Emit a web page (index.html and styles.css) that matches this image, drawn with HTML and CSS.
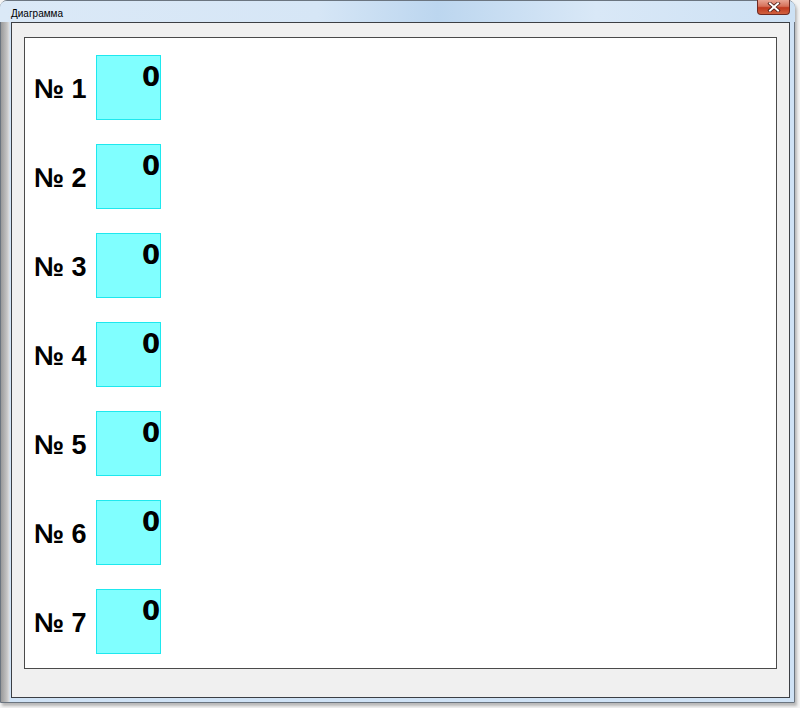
FILE: index.html
```html
<!DOCTYPE html>
<html lang="ru">
<head>
<meta charset="utf-8">
<title>Диаграмма</title>
<link rel="stylesheet" href="styles.css">
</head>
<body>
<div class="window">
  <div class="titlebar">
    <span class="title">Диаграмма</span>
    <div class="close">
      <svg width="14" height="10" viewBox="0 0 14 10">
        <path d="M3 1.5 L11 8.5 M11 1.5 L3 8.5" stroke="#4a1a14" stroke-width="3.6" stroke-linecap="square"/>
        <path d="M3 1.5 L11 8.5 M11 1.5 L3 8.5" stroke="#ffffff" stroke-width="2" stroke-linecap="square"/>
      </svg>
    </div>
  </div>
  <div class="client">
    <div class="panel">
      <div class="row"><span class="label">№ 1</span><div class="box"><span class="val">0</span></div></div>
      <div class="row"><span class="label">№ 2</span><div class="box"><span class="val">0</span></div></div>
      <div class="row"><span class="label">№ 3</span><div class="box"><span class="val">0</span></div></div>
      <div class="row"><span class="label">№ 4</span><div class="box"><span class="val">0</span></div></div>
      <div class="row"><span class="label">№ 5</span><div class="box"><span class="val">0</span></div></div>
      <div class="row"><span class="label">№ 6</span><div class="box"><span class="val">0</span></div></div>
      <div class="row"><span class="label">№ 7</span><div class="box"><span class="val">0</span></div></div>
    </div>
  </div>
</div>
</body>
</html>
```

FILE: styles.css
```css
html, body {
  margin: 0;
  padding: 0;
}
body {
  width: 800px;
  height: 708px;
  background: #f4f4f4;
  overflow: hidden;
  font-family: "Liberation Sans", Arial, sans-serif;
}
.window {
  box-sizing: border-box;
  width: 795px;
  height: 703px;
  border: 1px solid #6b7580;
  border-radius: 7px 7px 0 0;
  background:
    linear-gradient(to right, #9a9a9a 0px, #c4c4c4 6px, #dcdcdc 8px, #cfe2f5 9px, #cfe2f5 100%);
  display: flex;
  flex-direction: column;
  box-shadow: 2px 3px 3px rgba(0,0,0,0.25);
  position: relative;
}
.titlebar {
  height: 21px;
  flex: none;
  display: flex;
  align-items: flex-start;
  justify-content: space-between;
  background: linear-gradient(to right, #dbe9f7 0%, #d6e6f6 40%, #bcd6ef 55%, #d9e8f7 75%, #cde1f4 100%);
  border-radius: 6px 6px 0 0;
  margin: 0 -1px 0 -1px;
}
.title {
  font-family: "Liberation Sans", Arial, sans-serif;
  font-size: 10px;
  color: #000;
  margin: 7px 0 0 11px;
}
.close {
  width: 33px;
  height: 15px;
  margin-right: 5px;
  margin-top: -1px;
  box-sizing: border-box;
  border: 1px solid #6e2a22;
  border-top: none;
  border-radius: 0 0 4px 4px;
  background: linear-gradient(to bottom, #e8a493 0%, #d6715a 45%, #c0391f 55%, #d0613f 100%);
  display: flex;
  align-items: center;
  justify-content: center;
}
.client {
  flex: 1;
  box-sizing: border-box;
  margin: 0 4px 4px 10px;
  border: 1px solid #3c3f44;
  background: #f0f0f0;
  padding: 14px 12px 28px 12px;
  display: flex;
}
.panel {
  flex: 1;
  box-sizing: border-box;
  border: 1px solid #4a4a4a;
  background: #ffffff;
  padding: 17px 0 0 9px;
  display: flex;
  flex-direction: column;
  gap: 24px;
}
.row {
  display: flex;
  align-items: center;
  height: 65px;
}
.label {
  width: 62px;
  font-size: 27px;
  font-weight: bold;
  color: #000;
  padding-top: 4px;
}
.box {
  box-sizing: border-box;
  width: 65px;
  height: 65px;
  background: #80ffff;
  border: 1px solid #1ee8ee;
  display: flex;
  justify-content: flex-end;
  align-items: flex-start;
}
.val {
  font-family: "DejaVu Sans", Verdana, sans-serif;
  font-weight: bold;
  font-size: 26px;
  line-height: 1;
  margin: 8px 0 0 0;
  color: #000;
}
```
